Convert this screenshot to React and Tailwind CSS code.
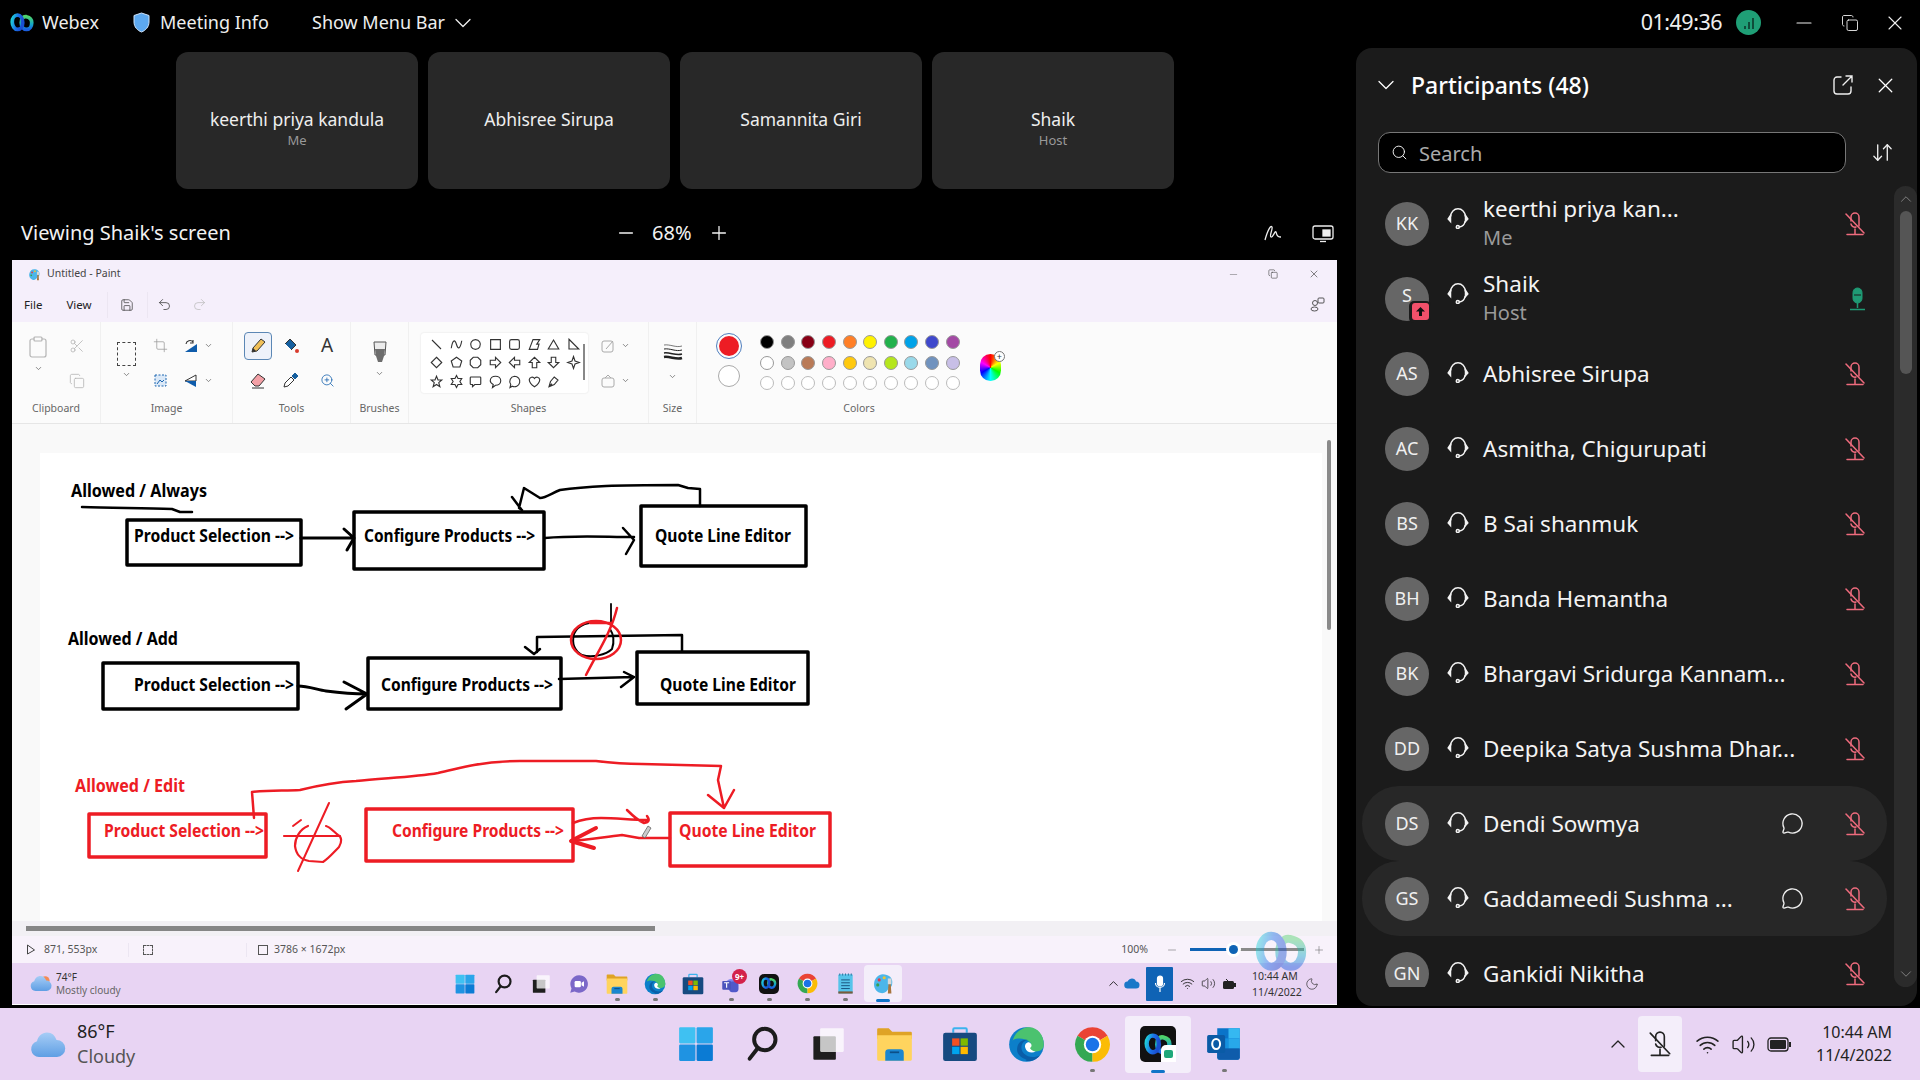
import React from 'react';
import { ChevronDown, ChevronUp, X, Minus, Plus, Search, ArrowDownUp, MessageCircle, Scissors, Copy, Clipboard, Crop, Save, Undo2, Redo2, ZoomIn, Wifi, Volume2, Moon } from 'lucide-react';

const PARTICIPANTS = [
    { initials: 'KK', name: 'keerthi priya kan...', sub: 'Me' },
    { initials: 'S', name: 'Shaik', sub: 'Host', sharing: true, live: true },
    { initials: 'AS', name: 'Abhisree Sirupa' },
    { initials: 'AC', name: 'Asmitha, Chigurupati' },
    { initials: 'BS', name: 'B Sai shanmuk' },
    { initials: 'BH', name: 'Banda Hemantha' },
    { initials: 'BK', name: 'Bhargavi Sridurga Kannam...' },
    { initials: 'DD', name: 'Deepika Satya Sushma Dhar...' },
    { initials: 'DS', name: 'Dendi Sowmya', chat: true, hover: true },
    { initials: 'GS', name: 'Gaddameedi Sushma ...', chat: true, hover: true },
    { initials: 'GN', name: 'Gankidi Nikitha' },
];

const THUMBS = [
    { name: 'keerthi priya kandula', sub: 'Me' },
    { name: 'Abhisree Sirupa' },
    { name: 'Samannita Giri' },
    { name: 'Shaik', sub: 'Host' },
];

const COLORS_ROW1 = ['#000000', '#7f7f7f', '#880015', '#ed1c24', '#ff7f27', '#fff200', '#22b14c', '#00a2e8', '#3f48cc', '#a349a4'];
const COLORS_ROW2 = ['#ffffff', '#c3c3c3', '#b97a57', '#ffaec9', '#ffc90e', '#efe4b0', '#b5e61d', '#99d9ea', '#7092be', '#c8bfe7'];

const SHAPES = [
    'M4 4l12 12',
    'M3 15C5 3 8 3 10 10s5 6 7-5',
    'M10 3.5a6.5 6.5 0 1 0 .01 0z',
    'M3.5 3.5h13v13h-13z',
    'M6 3.5h8a2.5 2.5 0 0 1 2.5 2.5v8a2.5 2.5 0 0 1-2.5 2.5H6A2.5 2.5 0 0 1 3.5 14V6A2.5 2.5 0 0 1 6 3.5z',
    'M8 3.5h9l-4 6h3l-2 7H3z',
    'M10 4l7 12H3z',
    'M4 3l13 13H4z',
    'M10 3l7 7-7 7-7-7z',
    'M10 3l7 5-2.5 8h-9L3 8z',
    'M7 3h6l4 4v6l-4 4H7l-4-4V7z',
    'M3 7h7V3l7 7-7 7v-4H3z',
    'M17 7h-7V3l-7 7 7 7v-4h7z',
    'M7 17v-7H3l7-7 7 7h-4v7z',
    'M7 3v7H3l7 7 7-7h-4V3z',
    'M10 2l2 6 6 2-6 2-2 6-2-6-6-2 6-2z',
    'M10 3l2 5h5l-4 3.5 1.5 5.5L10 14l-4.500 3L7 11.500 3 8h5z',
    'M10 2l2 4h5l-2.500 4 2.500 4h-5l-2 4-2-4H3l2.500-4L3 6h5z',
    'M4 4h12a1 1 0 0 1 1 1v8a1 1 0 0 1-1 1H9l-3 3v-3H4a1 1 0 0 1-1-1V5a1 1 0 0 1 1-1z',
    'M10 3c4 0 7 2.500 7 6s-3 6-7 6l-4 3 1-4c-2-1-4-3-4-5 0-3.500 3-6 7-6z',
    'M10 3a7 7 0 1 1-3 13.300L4 18l1-4a7 7 0 0 1 5-11z',
    'M10 17S3 12 3 7.500A3.800 3.800 0 0 1 10 6a3.800 3.800 0 0 1 7 1.500C17 12 10 17 10 17z',
    'M4 17l2-7 5-6 5 4-5 6zM4 17l4-4',
];

const Logo = ({ size = 24, className = '', opacity = 1 }) => (
    <svg width={size} height={size * 0.78} viewBox="0 0 32 25" className={className} opacity={opacity}>
        <path d="M22 5c-4-1-7 2-7 8 0 5 3 9 7 9s7-4 7-9c0-4-2-7-7-8" fill="none" stroke="url(#webexGreen)" strokeWidth="5" strokeLinecap="round" />
        <path d="M10 3C6 3 3 7 3 12s3 10 7 10 7-4 7-9c0-6-3-10-7-10z" fill="none" stroke="url(#webexBlue)" strokeWidth="5" />
    </svg>
);

const WinIcon = ({ size }) => (
    <svg width={size} height={size} viewBox="0 0 32 32">
        <rect x="1" y="1" width="14.500" height="14.500" rx="1" fill="#3fc1f2" />
        <rect x="16.500" y="1" width="14.500" height="14.500" rx="1" fill="#2aa5ea" />
        <rect x="1" y="16.500" width="14.500" height="14.500" rx="1" fill="#1f93e2" />
        <rect x="16.500" y="16.500" width="14.500" height="14.500" rx="1" fill="#0b7bd4" />
    </svg>
);

const SearchIcon = ({ size }) => (
    <svg width={size} height={size} viewBox="0 0 32 32" fill="none" stroke="#1c1c1c" strokeWidth="3.500" strokeLinecap="round">
        <circle cx="18.500" cy="12" r="9.500" />
        <path d="M12 20l-7 9" />
    </svg>
);

const TaskViewIcon = ({ size }) => (
    <svg width={size} height={size} viewBox="0 0 32 32">
        <rect x="3" y="9" width="20" height="21" rx="1" fill="#1e1e1e" />
        <rect x="9" y="2" width="21" height="21" rx="1" fill="#ffffff" fillOpacity="0.75" />
    </svg>
);

const FolderIcon = ({ size }) => (
    <svg width={size} height={size} viewBox="0 0 32 32">
        <path d="M1 3a1 1 0 0 1 1-1h9l3 3h16a1 1 0 0 1 1 1v5H1z" fill="#dfa325" />
        <path d="M1 8h30v21a1 1 0 0 1-1 1H2a1 1 0 0 1-1-1z" fill="#ffd45e" />
        <path d="M8 30v-7a3 3 0 0 1 3-3h10a3 3 0 0 1 3 3v7z" fill="#1a86d0" />
        <rect x="12" y="22" width="8" height="1.500" fill="#0c4f87" />
    </svg>
);

const StoreIcon = ({ size }) => (
    <svg width={size} height={size} viewBox="0 0 32 32">
        <path d="M10 6V3a1 1 0 0 1 1-1h10a1 1 0 0 1 1 1v3" fill="none" stroke="#3cb3ee" strokeWidth="1.800" />
        <rect x="1" y="6" width="30" height="25" rx="2" fill="#174a80" />
        <rect x="9" y="11" width="6.500" height="6.500" fill="#f25022" />
        <rect x="16.500" y="11" width="6.500" height="6.500" fill="#7fba00" />
        <rect x="9" y="18.500" width="6.500" height="6.500" fill="#00a4ef" />
        <rect x="16.500" y="18.500" width="6.500" height="6.500" fill="#ffb900" />
    </svg>
);

const EdgeIcon = ({ size }) => (
    <svg width={size} height={size} viewBox="0 0 32 32">
        <circle cx="16" cy="16" r="15" fill="#0c7fca" />
        <path d="M4 13C6 4 14 1 18 1c8 0 13 7 13 15 0 4-3 6-7 6-3 0-6-1-6-3 2-1 3-3 1-5-4-4-14-4-15-1z" fill="#4bc26f" />
        <path d="M17 12c-6 1-7 8-3 12 3 3 9 4 14 1-3 4-8 6-13 5 5-1-5-1-7-8-1-6 3-11 9-10z" fill="#0a5ea8" />
        <path d="M18 14c3 1 3 4 1 5 1 2 3 3 5 3-3 2-8 1-9-3-1-3 1-5 3-5z" fill="#ffffff" />
    </svg>
);

const ChromeIcon = ({ size }) => (
    <svg width={size} height={size} viewBox="0 0 32 32">
        <path d="M16 16L3 8.500A15 15 0 0 1 29 8.500z" fill="#ea4335" />
        <path d="M16 16L3 8.500A15 15 0 0 0 16 31z" fill="#34a853" />
        <path d="M16 16L29 8.500A15 15 0 0 1 16 31z" fill="#fbbc05" />
        <circle cx="16" cy="16" r="7.500" fill="#ffffff" />
        <circle cx="16" cy="16" r="5.800" fill="#1a73e8" />
    </svg>
);

const OutlookIcon = ({ size }) => (
    <svg width={size} height={size} viewBox="0 0 32 32">
        <path d="M10 2h20v26a2 2 0 0 1-2 2H12a2 2 0 0 1-2-2z" fill="#0a74c9" />
        <rect x="20" y="2" width="10" height="9" fill="#35b8f1" />
        <rect x="10" y="11" width="10" height="9" fill="#1490df" />
        <rect x="20" y="11" width="10" height="9" fill="#28a8ea" />
        <path d="M10 20l20 0v8a2 2 0 0 1-2 2H12a2 2 0 0 1-2-2z" fill="#0f5cab" />
        <rect x="1" y="8" width="16" height="16" rx="1.500" fill="#0a5ba6" />
        <ellipse cx="9" cy="16" rx="3.500" ry="4.500" fill="none" stroke="#ffffff" strokeWidth="1.800" />
    </svg>
);

const WebexAppIcon = ({ size, badge }) => (
    <div className="relative flex items-center justify-center bg-[#111] rounded-[5px]" style={{ width: size, height: size }}>
        <Logo size={size * 0.78} />
        {badge && (
            <div className="absolute right-0 bottom-0 w-[15px] h-[17px] bg-white rounded-tl-[5px] flex items-center justify-center">
                <div className="w-[9px] h-[8px] bg-[#1fa87a] rounded-[2px]" />
            </div>
        )}
    </div>
);

const MeetIcon = ({ size }) => (
    <svg width={size} height={size} viewBox="0 0 32 32">
        <path d="M16 2a14 14 0 1 1-7 26l-7 2 2-7A14 14 0 0 1 16 2z" fill="#7b68c8" />
        <rect x="9" y="11" width="10" height="10" rx="2" fill="#fff" />
        <path d="M20 14l4-2.500v9L20 18z" fill="#fff" />
    </svg>
);

const TeamsIcon = ({ size }) => (
    <div className="relative" style={{ width: size, height: size }}>
        <svg width={size} height={size} viewBox="0 0 32 32">
            <circle cx="16" cy="17" r="9" fill="#7b83eb" />
            <rect x="13" y="12" width="15" height="17" rx="5" fill="#5059c9" />
            <rect x="2" y="11" width="14" height="14" rx="1.500" fill="#4b53bc" />
            <path d="M5 14h8M9 14v8" stroke="#fff" strokeWidth="1.800" />
        </svg>
        <span className="absolute -top-[5px] -right-[6px] w-[15px] h-[15px] rounded-full bg-[#d3224a] text-white text-[8px] font-bold leading-[15px] text-center">9+</span>
    </div>
);

const NotepadIcon = ({ size }) => (
    <svg width={size} height={size} viewBox="0 0 32 32">
        <rect x="6" y="3" width="20" height="27" rx="1.500" fill="#56c3ea" />
        <rect x="6" y="27" width="20" height="3" fill="#7a5a3a" />
        <path d="M10 11h12M10 15h12M10 19h12M10 23h12" stroke="#184f7a" strokeWidth="1.300" />
        <path d="M8 2v3M12 2v3M16 2v3M20 2v3M24 2v3" stroke="#2a6f9a" strokeWidth="1.300" />
    </svg>
);

const PaintIcon = ({ size }) => (
    <svg width={size} height={size} viewBox="0 0 32 32">
        <path d="M15 3c8 0 15 5 13 14-1 5-3 3-5 6-2 4-6 8-12 6C5 27 2 21 3 15 4 8 9 3 15 3z" fill="#4cb6ea" />
        <circle cx="10" cy="11" r="2.200" fill="#e23b4a" />
        <circle cx="17" cy="8" r="2.200" fill="#f2c230" />
        <circle cx="8" cy="18" r="2.200" fill="#37a04f" />
        <path d="M22 30l1-14h3l1 14z" fill="#a8763e" />
        <rect x="22" y="9" width="5" height="8" fill="#d8d8d8" />
    </svg>
);

const CloudIcon = ({ size, sun }) => (
    <svg width={size} height={size * 0.75} viewBox="0 0 36 27">
        {sun && <circle cx="25" cy="9" r="7" fill="#f48a54" />}
        <path d="M9 26a8 8 0 0 1-2-15.700C8 5 12 1.500 17 1.500c5 0 8 3 9.500 7.500A8.500 8.500 0 0 1 27 26z" fill="url(#cloudFill)" />
    </svg>
);

const Headset = () => (
    <svg width="22" height="21" viewBox="0 0 22 21" fill="none" stroke="#f2f2f2" strokeWidth="1.500" strokeLinecap="round">
        <path d="M3.800 8a7.200 7.200 0 0 1 14.400 0" />
        <path d="M3.500 7.500L1.200 11l2.300 2.500zM18.500 7.500l2.300 3.500-2.300 2.500z" fill="#f2f2f2" />
        <path d="M18 13.500c-.5 3-2.500 5-5.500 5.500" />
        <circle cx="10.800" cy="19" r="1.500" />
    </svg>
);

const MicMuted = ({ color = '#ee6b7d', size = 22 }) => (
    <svg width={size} height={size + 2} viewBox="0 0 22 24" fill="none" stroke={color} strokeWidth="1.500" strokeLinecap="round">
        <path d="M7 9V5a4 4 0 0 1 8 0v9" />
        <path d="M7 12a4 4 0 0 0 5 3" />
        <path d="M11 17v5M3 22.500h16" />
        <path d="M2 2l18 19" />
    </svg>
);

const MicLive = () => (
    <svg width="22" height="24" viewBox="0 0 22 24" fill="none" className="translate-x-[2px]">
        <rect x="7" y="1" width="9" height="15" rx="4.500" fill="#1f9a74" stroke="#1f9a74" />
        <path d="M8 8h7" stroke="#1b1b1b" strokeWidth="1" />
        <path d="M11.500 16v5M4 22.500h15" stroke="#1f9a74" strokeWidth="1.500" />
    </svg>
);

const PopOut = () => (
    <svg width="20" height="20" viewBox="0 0 20 20" fill="none" stroke="#eee" strokeWidth="1.400" strokeLinecap="round">
        <path d="M8 2H4a3 3 0 0 0-3 3v11a3 3 0 0 0 3 3h11a3 3 0 0 0 3-3v-4" />
        <path d="M10 10l9-9M13 1h6v6" />
    </svg>
);

function ParticipantRow({ p }) {
    return (
        <div className={`h-[75px] flex items-center pl-[23px] pr-[21px] rounded-[37px] ${p.hover ? 'bg-[#272727]' : ''}`}>
            <div className="relative w-[44px] h-[44px] shrink-0 rounded-full bg-[#666] flex items-center justify-center text-[18px] text-[#f0f0f0]">
                <span className={p.sharing ? '-mt-[6px]' : ''}>{p.initials}</span>
                {p.sharing && (
                    <div className="absolute right-[-2px] bottom-[-2px] w-[22px] h-[22px] rounded-[5px] bg-[#1b1b1b] flex items-center justify-center">
                        <div className="w-[17px] h-[17px] rounded-[3px] bg-[#f2506a] flex items-center justify-center">
                            <svg width="11" height="11" viewBox="0 0 11 11"><path d="M5.500 1L1 5.500h3V10h3V5.500h3z" fill="#111" /></svg>
                        </div>
                    </div>
                )}
            </div>
            <div className={`ml-[18px] shrink-0 ${p.sub ? '-translate-y-[5px]' : '-translate-y-[1px]'}`}><Headset /></div>
            <div className="ml-[14px] flex-1 min-w-0 whitespace-nowrap">
                <div className="text-[22.500px] leading-[26px] text-[#f4f4f4]">{p.name}</div>
                {p.sub && <div className="mt-[3px] text-[20px] leading-[26px] text-[#9a9a9a]">{p.sub}</div>}
            </div>
            {p.chat && <MessageCircle size={23} strokeWidth={1.4} className="text-[#eee] mr-[40px] shrink-0" />}
            {p.live ? <MicLive /> : <MicMuted />}
        </div>
    );
}

function RibbonGroup({ label, width, children, last }) {
    return (
        <div className={`h-full shrink-0 flex flex-col ${last ? '' : 'border-r border-[#f0f0f0]'}`} style={{ width }}>
            <div className="h-[76px] pt-[6px] flex">{children}</div>
            <div className="h-[20px] leading-[20px] text-center text-[10.5px] text-[#666]">{label}</div>
        </div>
    );
}

const Chev = ({ className = '' }) => <ChevronDown size={9} className={`text-[#666] ${className}`} />;

function Ribbon() {
    return (
        <div className="h-[102px] shrink-0 flex bg-[#fbfbfb] border-b border-[#e6e6e6]">
            <RibbonGroup label="Clipboard" width={89}>
                <div className="ml-[14px] w-[24px] flex flex-col items-center pt-[7px] text-[#b4b4b4]">
                    <Clipboard size={24} strokeWidth={1.2} />
                    <Chev className="mt-[5px]" />
                </div>
                <div className="ml-[15px] w-[24px] flex flex-col items-center text-[#b4b4b4]">
                    <div className="h-[35px] flex items-center"><Scissors size={16} strokeWidth={1.2} /></div>
                    <div className="h-[35px] flex items-center"><Copy size={16} strokeWidth={1.2} /></div>
                </div>
            </RibbonGroup>
            <RibbonGroup label="Image" width={132}>
                <div className="ml-[15px] w-[20px] flex flex-col items-center pt-[14px]">
                    <div className="w-[19px] h-[24px] border-[1.500px] border-dashed border-[#444]" />
                    <Chev className="mt-[4px]" />
                </div>
                <div className="ml-[14px] w-[20px] flex flex-col items-center text-[#999]">
                    <div className="h-[35px] flex items-center"><Crop size={15} strokeWidth={1.2} /></div>
                    <div className="h-[35px] flex items-center">
                        <svg width="15" height="15" viewBox="0 0 15 15" fill="none"><rect x="2" y="2" width="11" height="11" fill="#dbe9f8" stroke="#1c66b0" strokeDasharray="2 1.500" /><path d="M4 11l3-4 2 2 2-2" stroke="#1c66b0" /></svg>
                    </div>
                </div>
                <div className="ml-[14px] flex flex-col">
                    <div className="h-[35px] flex items-center gap-[6px]">
                        <svg width="14" height="14" viewBox="0 0 14 14"><path d="M1 13L13 5v8z" fill="#0f5cab" /><path d="M2 5a4 4 0 0 1 7-2M9 1v3h-3" fill="none" stroke="#333" strokeWidth="1.100" /></svg>
                        <Chev />
                    </div>
                    <div className="h-[35px] flex items-center gap-[6px]">
                        <svg width="14" height="14" viewBox="0 0 14 14"><path d="M12 1v6L1 7z" fill="#fff" stroke="#333" /><path d="M12 13V7L1 7z" fill="#0f5cab" /></svg>
                        <Chev />
                    </div>
                </div>
            </RibbonGroup>
            <RibbonGroup label="Tools" width={118}>
                <div className="ml-[11px] grid grid-cols-[28px_34px_34px] gap-x-[2px] grid-rows-[35px_34px] items-center justify-items-center">
                    <div className="w-[28px] h-[28px] border border-[#5b87b5] rounded-[4px] bg-[#eef2fa] flex items-center justify-center">
                        <svg width="18" height="18" viewBox="0 0 18 18"><path d="M3 15l1-4L12 2l4 3-8 9z" fill="#f0c058" stroke="#333" /><path d="M3 15l1-4 3 3z" fill="#333" /></svg>
                    </div>
                    <svg width="18" height="18" viewBox="0 0 18 18"><path d="M3 7l5-5 6 6-5 5z" fill="#17609f" stroke="#333" /><path d="M3 7l6 6" stroke="#fff" /><circle cx="15" cy="14" r="2" fill="#d83a2c" /></svg>
                    <span className="text-[19px] text-[#333] leading-none">A</span>
                    <svg width="18" height="18" viewBox="0 0 18 18"><path d="M2 11l7-8 7 5-6 7H6z" fill="#f3a0a6" stroke="#333" /><path d="M3 17h12" stroke="#333" /></svg>
                    <svg width="18" height="18" viewBox="0 0 18 18"><path d="M2 16l1-4 6-6 3 3-6 6z" fill="#fff" stroke="#333" /><path d="M10 5l3-3 3 3-3 3z" fill="#17609f" stroke="#17609f" /></svg>
                    <ZoomIn size={15} strokeWidth={1.3} className="text-[#1c66b0]" />
                </div>
            </RibbonGroup>
            <RibbonGroup label="Brushes" width={58}>
                <div className="w-full flex flex-col items-center pt-[13px]">
                    <svg width="14" height="24" viewBox="0 0 14 24"><path d="M1 1h12l-1 13H2z" fill="#ececec" stroke="#555" /><path d="M2 8h10l-1 7-2 6H5l-2-6z" fill="#6d6d6d" /></svg>
                    <Chev className="mt-[4px]" />
                </div>
            </RibbonGroup>
            <RibbonGroup label="Shapes" width={240}>
                <div className="relative ml-[12px] w-[167px] h-[60px] mt-[5px] bg-white rounded-[3px] shadow-[0_0_2px_rgba(0,0,0,0.12)] pl-[6px] pt-[2px]">
                    <div className="grid grid-cols-[repeat(8,19.5px)] grid-rows-[repeat(3,18.500px)] items-center justify-items-center">
                        {SHAPES.map((d) => (
                            <svg key={d} width="15" height="15" viewBox="0 0 20 20" fill="none" stroke="#333" strokeWidth="1.500"><path d={d} /></svg>
                        ))}
                    </div>
                    <div className="absolute left-[162px] top-[11px] w-[2px] h-[36px] bg-[#888]" />
                </div>
                <div className="ml-[13px] flex flex-col text-[#aaa]">
                    <div className="h-[35px] flex items-center gap-[6px]">
                        <svg width="14" height="14" viewBox="0 0 14 14" fill="none" stroke="#aaa"><rect x="1" y="2" width="11" height="11" rx="2" /><path d="M5 10l7-8" /></svg>
                        <Chev />
                    </div>
                    <div className="h-[35px] flex items-center gap-[6px]">
                        <svg width="14" height="14" viewBox="0 0 14 14" fill="none" stroke="#aaa"><rect x="1" y="4" width="12" height="9" rx="2" /><path d="M4 4l3-3 3 3" /></svg>
                        <Chev />
                    </div>
                </div>
            </RibbonGroup>
            <RibbonGroup label="Size" width={48}>
                <div className="w-full flex flex-col items-center pt-[15px]">
                    <svg width="20" height="18" viewBox="0 0 20 18" fill="none" stroke="#222"><path d="M1 2c6-1 12 3 18 1" strokeWidth=".6" /><path d="M1 6c6-1 12 3 18 1" strokeWidth="1" /><path d="M1 10c6-1 12 3 18 1" strokeWidth="1.500" /><path d="M1 14c6-1 12 3 18 1" strokeWidth="2.500" /></svg>
                    <Chev className="mt-[11px]" />
                </div>
            </RibbonGroup>
            <RibbonGroup label="Colors" width={324} last>
                <div className="ml-[19px] flex flex-col items-center pt-[5px] gap-[6px]">
                    <div className="w-[26px] h-[26px] rounded-full border border-[#4f7fbf] p-[2px]">
                        <div className="w-full h-full rounded-full bg-[#ed1c24]" />
                    </div>
                    <div className="w-[22px] h-[22px] rounded-full bg-white border border-[#aaa]" />
                </div>
                <div className="ml-[18px] pt-[7px] grid grid-cols-[repeat(10,14px)] gap-x-[6.650px] gap-y-[6.500px] h-[62px]">
                    {COLORS_ROW1.map((c) => <div key={c} className="w-[14px] h-[14px] rounded-full border border-[#999]" style={{ background: c }} />)}
                    {COLORS_ROW2.map((c) => <div key={c} className="w-[14px] h-[14px] rounded-full border border-[#999]" style={{ background: c }} />)}
                    {COLORS_ROW1.map((c) => <div key={c} className="w-[14px] h-[14px] rounded-full border border-[#bbb] bg-white" />)}
                </div>
                <div className="relative ml-[20px] mt-[26px] w-[21px] h-[27px]">
                    <div className="w-full h-full rounded-full bg-[conic-gradient(#f00,#ff0,#0f0,#0ff,#00f,#f0f,#f00)]" />
                    <div className="absolute -top-[3px] -right-[4px] w-[11px] h-[11px] rounded-full bg-white border border-[#777] flex items-center justify-center text-[9px] leading-none text-[#333]">+</div>
                </div>
            </RibbonGroup>
        </div>
    );
}

const TEXT = "'Noto Sans', sans-serif";

function Label({ x, y, w, fill = '#000', children }) {
    return (
        <text x={x} y={y} textLength={w} lengthAdjust="spacingAndGlyphs" fill={fill} fontFamily={TEXT} fontWeight="700" fontSize="17">
            {children}
        </text>
    );
}

function Drawing() {
    return (
        <svg width="1282" height="469" viewBox="40 453 1282 469" className="bg-white block">
            <g fill="none" stroke="#000" strokeWidth="3.500" strokeLinejoin="round" strokeLinecap="round">
                <rect x="127" y="520" width="174" height="45" />
                <rect x="354" y="512" width="190" height="57" />
                <rect x="641" y="506" width="165" height="60" />
                <rect x="103" y="663" width="195" height="46" />
                <rect x="368" y="658" width="193" height="51" />
                <rect x="637" y="652" width="171" height="52" />
                <path d="M82 507c30 1 60 1 90 2l8 3h12" strokeWidth="2.500" />
                <path d="M301 538h53M344 529l10 9-7 12" strokeWidth="3" />
                <path d="M545 538c30-3 60-1 89-1M623 528l11 12-8 14" strokeWidth="2.500" />
                <path d="M700 506v-17l-12-1-10-3c-25 0-50 0-72 1-20 1-32 2-46 4-8 3-14 8-20 8l-16-10-5 20 3 2M512 497l9 12" strokeWidth="2.500" />
                <path d="M298 686c10 0 20 4 28 5 15 2 28 3 41 3M344 682l23 12-21 15" strokeWidth="3" />
                <path d="M559 679l75-2M624 672l10 5-13 10" strokeWidth="2.500" />
                <path d="M682 651v-16l-145 2v15M525 647l9 7 6-5" strokeWidth="2.500" />
                <path d="M611 604v21" strokeWidth="1.800" />
                <path d="M600 623c-10-2-22 1-26 11-2 8-1 16 8 21 10 3 24 0 30-6 2-6 2-14-2-20" strokeWidth="2" />
            </g>
            <g fill="none" stroke="#ed1c24" strokeWidth="2.500" strokeLinejoin="round" strokeLinecap="round">
                <ellipse cx="596" cy="640" rx="25" ry="19" />
                <path d="M617 608c-6 25-20 45-31 67M590 623h22" />
            </g>
            <g fill="none" stroke="#ed1c24" strokeWidth="3.500" strokeLinejoin="round" strokeLinecap="round">
                <rect x="89" y="814" width="177" height="43" />
                <rect x="366" y="809" width="207" height="52" />
                <rect x="670" y="813" width="160" height="53" />
                <path d="M254 818L252 792C270 790 285 791 300 790C320 785 338 782 356 781C385 778 415 777 438 773C452 770 462 767 474 765C490 762 505 761 520 761L596 761C612 763 628 764 642 764L721 766L718 780L724 808M708 795L724 808L734 790" strokeWidth="2.500" />
                <path d="M284 836h56" strokeWidth="2.200" />
                <path d="M308 826c-8 3-13 12-13 20 1 8 6 14 14 15l14 1c6-4 10-9 16-15 3-5 3-10-1-12-4-3-8-8-12-9" strokeWidth="2.200" />
                <path d="M329 803l-31 68M293 826l8-6" strokeWidth="2" />
                <path d="M573 823c10-4 18-5 28-5 16 0 30 2 46 2M627 810c6 6 12 11 17 13 5-1 6-3 3-7" strokeWidth="2.500" />
                <path d="M670 838h-31l-17-3c-18 2-34 5-51 6" strokeWidth="2.500" />
                <path d="M596 828l-25 13 23 7" strokeWidth="4" />
            </g>
            <path d="M642 836l6-10 3 2-6 10z" fill="#ccc" stroke="#555" strokeWidth=".7" />
            <Label x={71} y={497} w={136}>Allowed / Always</Label>
            <Label x={134} y={542} w={160}>Product Selection --&gt;</Label>
            <Label x={364} y={542} w={171}>Configure Products --&gt;</Label>
            <Label x={655} y={542} w={136}>Quote Line Editor</Label>
            <Label x={68} y={645} w={110}>Allowed / Add</Label>
            <Label x={134} y={691} w={160}>Product Selection --&gt;</Label>
            <Label x={381} y={691} w={172}>Configure Products --&gt;</Label>
            <Label x={660} y={691} w={136}>Quote Line Editor</Label>
            <Label x={75} y={792} w={110} fill="#ed1c24">Allowed / Edit</Label>
            <Label x={104} y={837} w={160} fill="#ed1c24">Product Selection --&gt;</Label>
            <Label x={392} y={837} w={172} fill="#ed1c24">Configure Products --&gt;</Label>
            <Label x={679} y={837} w={137} fill="#ed1c24">Quote Line Editor</Label>
        </svg>
    );
}

const TaskSlot = ({ width, dot, active, children }) => (
    <div className={`relative h-full flex items-center justify-center ${active ? 'bg-[#f4eefa] rounded-[4px]' : ''}`} style={{ width }}>
        {children}
        {dot && <div className="absolute bottom-[1px] left-1/2 -ml-[2px] w-[5px] h-[3px] rounded-full bg-[#777]" />}
        {active && <div className="absolute bottom-[0px] left-1/2 -ml-[7px] w-[14px] h-[3px] rounded-full bg-[#0f74c8]" />}
    </div>
);

function InnerTaskbar() {
    return (
        <div className="h-[41px] shrink-0 bg-[#e8d4f3] flex items-center">
            <div className="w-[18px] shrink-0" />
            <div className="flex items-center gap-[4px] w-[416px] shrink-0">
                <CloudIcon size={22} sun />
                <div className="leading-none">
                    <div className="text-[10px] text-[#333] leading-[13px]">74°F</div>
                    <div className="text-[10px] text-[#666] leading-[13px]">Mostly cloudy</div>
                </div>
            </div>
            <div className="h-full flex py-[2px]">
                <TaskSlot width={38}><WinIcon size={20} /></TaskSlot>
                <TaskSlot width={38}><SearchIcon size={20} /></TaskSlot>
                <TaskSlot width={38}><TaskViewIcon size={20} /></TaskSlot>
                <TaskSlot width={38}><MeetIcon size={20} /></TaskSlot>
                <TaskSlot width={38} dot><FolderIcon size={22} /></TaskSlot>
                <TaskSlot width={38} dot><EdgeIcon size={22} /></TaskSlot>
                <TaskSlot width={38}><StoreIcon size={22} /></TaskSlot>
                <TaskSlot width={38} dot><TeamsIcon size={20} /></TaskSlot>
                <TaskSlot width={38} dot><WebexAppIcon size={20} /></TaskSlot>
                <TaskSlot width={38} dot><ChromeIcon size={21} /></TaskSlot>
                <TaskSlot width={38} dot><NotepadIcon size={23} /></TaskSlot>
                <TaskSlot width={38} active><PaintIcon size={23} /></TaskSlot>
            </div>
            <div className="flex-1" />
            <ChevronUp size={15} strokeWidth={1.5} className="text-[#222]" />
            <svg width="16" height="11" viewBox="0 0 16 11" className="ml-[3px]"><path d="M4 10.500a3.500 3.500 0 0 1-.5-7C4.500 1.500 6.500.5 8 .5c2 0 3.500 1 4 3a3.500 3.500 0 0 1 0 7z" fill="#1a78c8" /></svg>
            <div className="ml-[6px] w-[27px] h-[34px] bg-[#0f63b5] flex items-center justify-center rounded-[1px]">
                <svg width="12" height="18" viewBox="0 0 12 18" fill="none" stroke="#fff" strokeWidth="1.200"><rect x="3.500" y="1" width="5" height="10" rx="2.500" fill="#fff" /><path d="M1.500 8a4.500 4.500 0 0 0 9 0M6 13v4" /></svg>
            </div>
            <Wifi size={15} strokeWidth={1.4} className="ml-[7px] text-[#222]" />
            <Volume2 size={15} strokeWidth={1.2} className="ml-[6px] text-[#222]" />
            <svg width="15" height="12" viewBox="0 0 15 12" className="ml-[6px]"><rect x="1" y="3" width="11" height="8" rx="1.500" fill="#222" /><rect x="12" y="5" width="2" height="4" fill="#222" /><path d="M4 1l2 2" stroke="#222" /></svg>
            <div className="ml-[15px] w-[43px] text-right text-[10.500px] leading-[16px] text-[#333] whitespace-nowrap">
                <div>10:44 AM</div>
                <div>11/4/2022</div>
            </div>
            <Moon size={14} strokeWidth={1.1} className="ml-[10px] mr-[18px] text-[#222]" />
        </div>
    );
}

function PaintWindow() {
    return (
        <div className="ml-[12px] w-[1325px] h-[745px] flex flex-col bg-white overflow-hidden">
            <div className="h-[28px] shrink-0 bg-[#f5effb] flex items-center pl-[16px] pr-[17px] text-[10.5px] text-[#444]">
                <PaintIcon size={13} />
                <span className="ml-[6px]">Untitled - Paint</span>
                <div className="flex-1" />
                <Minus size={11} strokeWidth={1} className="text-[#555]" />
                <Copy size={10} strokeWidth={1.3} className="ml-[29px] text-[#333]" />
                <X size={12} strokeWidth={1.2} className="ml-[30px] text-[#333]" />
            </div>
            <div className="h-[34px] shrink-0 bg-[#f5effb] flex items-center pb-[1px] pl-[12px] pr-[12px] text-[11.5px] text-[#222]">
                <span>File</span>
                <span className="ml-[24px]">View</span>
                <div className="ml-[15px] w-px h-[26px] bg-[#ece6f2]" />
                <Save size={14} strokeWidth={1.2} className="ml-[12px] text-[#333]" />
                <div className="ml-[13px] w-px h-[26px] bg-[#ece6f2]" />
                <Undo2 size={15} strokeWidth={1.3} className="ml-[9px] text-[#444]" />
                <Redo2 size={15} strokeWidth={1.2} className="ml-[20px] text-[#bbb]" />
                <div className="flex-1" />
                <svg width="15" height="15" viewBox="0 0 15 15" fill="none" stroke="#444" strokeWidth=".9"><circle cx="5" cy="6" r="2.500" /><ellipse cx="4.500" cy="12" rx="3.500" ry="2" /><rect x="8" y="1" width="6" height="5" rx="1" /></svg>
            </div>
            <Ribbon />
            <div className="h-[497px] shrink-0 flex bg-[#f9f9f9]">
                <div className="ml-[28px] pt-[29px] w-[1282px]"><Drawing /></div>
                <div className="ml-[5px] mt-[16px] w-[4px] h-[190px] bg-[#8a8a8a] rounded-full" />
            </div>
            <div className="h-[15px] shrink-0 bg-[#f2f0f4] pl-[14px] pt-[5px]">
                <div className="w-[629px] h-[5px] bg-[#868686]" />
            </div>
            <div className="relative h-[27px] shrink-0 bg-[#f8f2fb] flex items-center text-[10.5px] text-[#555]">
                <svg width="10" height="11" viewBox="0 0 10 11" fill="none" stroke="#444" className="ml-[14px]"><path d="M1.500 1v9L8.500 6z" /></svg>
                <span className="ml-[8px] w-[84px]">871, 553px</span>
                <div className="w-px h-[14px] bg-[#ece6f2]" />
                <div className="ml-[14px] w-[10px] h-[10px] border border-dashed border-[#555]" />
                <div className="ml-[93px] w-px h-[14px] bg-[#ece6f2]" />
                <div className="ml-[11px] w-[10px] h-[10px] border border-[#555]" />
                <span className="ml-[6px]">3786 × 1672px</span>
                <div className="flex-1" />
                <span>100%</span>
                <Minus size={12} strokeWidth={1} className="ml-[18px]" />
                <div className="relative ml-[12px] w-[114px] h-[3px] bg-[#8a8a8a]">
                    <div className="w-[43px] h-full bg-[#0f63b5]" />
                    <div className="absolute left-[36px] -top-[6px] w-[15px] h-[15px] rounded-full bg-white flex items-center justify-center">
                        <div className="w-[9px] h-[9px] rounded-full bg-[#0f63b5]" />
                    </div>
                </div>
                <Plus size={12} strokeWidth={1} className="ml-[9px] mr-[12px]" />
                <Logo size={52} opacity={0.45} className="absolute left-[1243px] -top-[5px]" />
            </div>
            <InnerTaskbar />
        </div>
    );
}

function ParticipantsPanel() {
    return (
        <div className="w-[561px] h-[958px] bg-[#1b1b1b] rounded-[16px] flex flex-col overflow-hidden">
            <div className="h-[74px] shrink-0 flex items-center pl-[16px] pr-[19px] text-white">
                <ChevronDown size={28} strokeWidth={1.1} />
                <span className="ml-[11px] text-[23px] font-medium">Participants (48)</span>
                <div className="flex-1" />
                <PopOut />
                <X size={25} strokeWidth={1.2} className="ml-[20px]" />
            </div>
            <div className="h-[64px] shrink-0 pt-[10px] pl-[22px] flex items-start">
                <div className="w-[468px] h-[41px] bg-black border border-[#777] rounded-[12px] flex items-center pl-[12px] pt-[3px] text-[#aaa] text-[20px]">
                    <Search size={17} strokeWidth={1.4} className="text-[#eee] -mt-[3px]" />
                    <span className="ml-[11px]">Search</span>
                </div>
                <ArrowDownUp size={23} strokeWidth={1.4} className="ml-[25px] mt-[9px] text-[#eee]" />
            </div>
            <div className="flex h-[801px]">
                <div className="ml-[6px] w-[525px] overflow-hidden">
                    {PARTICIPANTS.map((p) => <ParticipantRow key={p.initials} p={p} />)}
                </div>
                <div className="ml-[7px] w-[23px] bg-[#2b2b2b] rounded-full flex flex-col items-center pt-[4px]">
                    <ChevronUp size={18} strokeWidth={1} className="text-[#999]" />
                    <div className="mt-[3px] w-[12px] h-[163px] bg-[#555] rounded-full" />
                    <div className="flex-1" />
                    <ChevronDown size={18} strokeWidth={1} className="mb-[4px] text-[#999]" />
                </div>
            </div>
        </div>
    );
}

export default function App() {
    return (
        <div className="w-[1920px] h-[1080px] bg-black flex flex-col overflow-hidden font-['Noto_Sans',sans-serif]">
            <svg className="absolute w-0 h-0">
                <defs>
                    <linearGradient id="webexBlue" x1="0" y1="0" x2="1" y2="0.300"><stop offset="0" stopColor="#1fd0d8" /><stop offset="0.550" stopColor="#1a6fe8" /><stop offset="1" stopColor="#1a4fd0" /></linearGradient>
                    <linearGradient id="webexGreen" x1="0" y1="0" x2="0" y2="1"><stop offset="0" stopColor="#4fd36a" /><stop offset="0.600" stopColor="#14a8c8" /><stop offset="1" stopColor="#1a5fe0" /></linearGradient>
                    <linearGradient id="cloudFill" x1="0" y1="0" x2="0" y2="1"><stop offset="0" stopColor="#a7cdf6" /><stop offset="1" stopColor="#5f9fe4" /></linearGradient>
                </defs>
            </svg>

            {/* top bar */}
            <div className="h-[48px] shrink-0 flex items-center pl-[10px] pb-[3px] text-[18px] text-[#eee]">
                <Logo size={24} />
                <span className="ml-[8px] w-[60px]">Webex</span>
                <svg width="17" height="21" viewBox="0 0 17 21" className="ml-[31px]"><path d="M8.500 1L16 3.500V10c0 5-3.500 8.500-7.500 10C4.500 18.500 1 15 1 10V3.500z" fill="#5da9f0" stroke="#cfe4fb" strokeWidth="1" /></svg>
                <span className="ml-[10px] w-[109px]">Meeting Info</span>
                <span className="ml-[43px] w-[133px]">Show Menu Bar</span>
                <ChevronDown size={28} strokeWidth={1.1} className="ml-[4px]" />
                <div className="flex-1" />
                <span className="text-[21.500px] tracking-[-0.5px]">01:49:36</span>
                <div className="ml-[14px] w-[25px] h-[25px] rounded-full bg-[#1f9f76] flex items-end justify-center gap-[2px] pb-[6px]">
                    <div className="w-[2px] h-[3px] bg-[#0f4d3a]" />
                    <div className="w-[2px] h-[7px] bg-[#0f4d3a]" />
                    <div className="w-[2px] h-[11px] bg-[#0f4d3a]" />
                </div>
                <Minus size={24} strokeWidth={1.1} className="ml-[31px]" />
                <Copy size={18} strokeWidth={1.2} className="ml-[25px]" />
                <X size={24} strokeWidth={1.1} className="ml-[24px] mr-[13px]" />
            </div>

            <div className="h-[960px] shrink-0 flex">
                <div className="w-[1356px] shrink-0">
                    <div className="h-[141px] pt-[4px] pl-[176px] flex gap-[10px]">
                        {THUMBS.map((t) => (
                            <div key={t.name} className="w-[242px] h-[137px] bg-[#282828] rounded-[12px] pt-[55px] flex flex-col items-center">
                                <div className="text-[17.500px] leading-[24px] text-[#eee]">{t.name}</div>
                                {t.sub && <div className="text-[13px] leading-[18px] text-[#999]">{t.sub}</div>}
                            </div>
                        ))}
                    </div>
                    <div className="relative h-[71px] pt-[17px] flex items-center text-[#f2f2f2]">
                        <span className="ml-[21px] text-[20px] w-[594px]">Viewing Shaik's screen</span>
                        <Minus size={22} strokeWidth={1.4} />
                        <span className="ml-[15px] text-[20px]">68%</span>
                        <Plus size={22} strokeWidth={1.4} className="ml-[16px]" />
                        <div className="flex-1" />
                        <svg width="20" height="20" viewBox="0 0 20 20" fill="none" stroke="#eee" strokeWidth="1.300"><path d="M2 17C5 6 8 2 9 4s-3 9-1 10 4-7 5-5 0 5 5 5" /></svg>
                        <svg width="22" height="20" viewBox="0 0 22 20" fill="none" stroke="#eee" strokeWidth="1.300" className="ml-[29px] mr-[22px]"><rect x="1" y="3" width="20" height="13" rx="2" /><rect x="11" y="7" width="7" height="6" fill="#eee" /><path d="M8 18.500h6" /></svg>
                    </div>
                    <PaintWindow />
                </div>
                <ParticipantsPanel />
            </div>

            {/* windows taskbar */}
            <div className="h-[72px] shrink-0 bg-[#e8d4f3] flex items-center">
                <div className="ml-[30px]"><CloudIcon size={36} /></div>
                <div className="ml-[11px] w-[586px] text-[18px] leading-[25px]">
                    <div className="text-[#222]">86°F</div>
                    <div className="text-[#555]">Cloudy</div>
                </div>
                <div className="flex h-[57px] items-center">
                    <TaskSlot width={66}><WinIcon size={36} /></TaskSlot>
                    <TaskSlot width={66}><SearchIcon size={36} /></TaskSlot>
                    <TaskSlot width={66}><TaskViewIcon size={36} /></TaskSlot>
                    <TaskSlot width={66}><FolderIcon size={37} /></TaskSlot>
                    <TaskSlot width={66}><StoreIcon size={36} /></TaskSlot>
                    <TaskSlot width={66}><EdgeIcon size={37} /></TaskSlot>
                    <TaskSlot width={66} dot><ChromeIcon size={37} /></TaskSlot>
                    <TaskSlot width={66} active><WebexAppIcon size={36} badge /></TaskSlot>
                    <TaskSlot width={66} dot><OutlookIcon size={36} /></TaskSlot>
                </div>
                <div className="flex-1" />
                <ChevronUp size={24} strokeWidth={1.3} className="text-[#222]" />
                <div className="ml-[8px] w-[44px] h-[56px] bg-[#f4eefa] rounded-[4px] flex items-center justify-center">
                    <MicMuted color="#222" size={24} />
                </div>
                <Wifi size={25} strokeWidth={1.5} className="ml-[13px] text-[#222]" />
                <Volume2 size={25} strokeWidth={1.3} className="ml-[11px] text-[#222]" />
                <svg width="25" height="17" viewBox="0 0 25 17" fill="none" className="ml-[11px]"><rect x="1" y="2" width="20" height="13" rx="3" stroke="#222" strokeWidth="1.300" /><rect x="3" y="4" width="16" height="9" rx="1" fill="#222" /><rect x="22" y="6" width="2" height="5" fill="#222" /></svg>
                <div className="ml-[24px] w-[76px] text-right text-[16px] leading-[23px] text-[#222] whitespace-nowrap">
                    <div>10:44 AM</div>
                    <div>11/4/2022</div>
                </div>
                <div className="w-[28px]" />
            </div>
        </div>
    );
}
